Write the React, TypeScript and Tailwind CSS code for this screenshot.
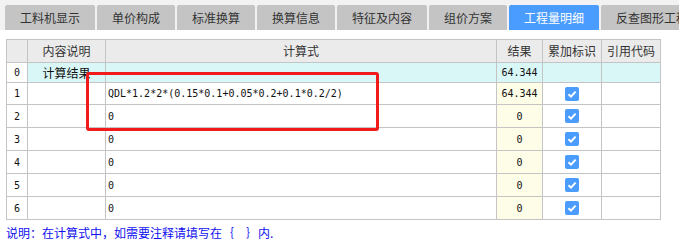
import React from 'react';

const tabs = [
  { label: '工料机显示', w: 'w-[90px]' },
  { label: '单价构成', w: 'w-[78px]' },
  { label: '标准换算', w: 'w-[78px]' },
  { label: '换算信息', w: 'w-[78px]' },
  { label: '特征及内容', w: 'w-[90px]' },
  { label: '组价方案', w: 'w-[78px]' },
  { label: '工程量明细', w: 'w-[90px]', active: true },
  { label: '反查图形工程量', w: 'w-[114px]' },
];

const rows = [
  { formula: 'QDL*1.2*2*(0.15*0.1+0.05*0.2+0.1*0.2/2)', result: '64.344', h: 'h-[22px]' },
  { formula: '0', result: '0', h: 'h-[23px]' },
  { formula: '0', result: '0', h: 'h-[23px]' },
  { formula: '0', result: '0', h: 'h-[23px]' },
  { formula: '0', result: '0', h: 'h-[23px]' },
  { formula: '0', result: '0', h: 'h-[23px]' },
];

const cjk = "font-['Microsoft_YaHei','Noto_Sans_CJK_SC',sans-serif]";
const mono = "font-['DejaVu_Sans_Mono','Liberation_Mono',monospace] text-[10px]";

// column widths, each including its right border
const cols = ['w-[21px]', 'w-[78px]', 'w-[391px]', 'w-[46px]', 'w-[59px]', 'w-[59px]'];

function Check() {
  return (
    <svg width="14" height="14" viewBox="0 0 14 14">
      <rect x="0" y="0" width="14" height="14" rx="2" fill="#4a9cff" />
      <path d="M3.5 7.2 L6 9.6 L10.6 4.6" stroke="#fff" strokeWidth="2" fill="none" />
    </svg>
  );
}

export default function App() {
  return (
    <div className={`relative w-[679px] h-[249px] overflow-hidden bg-white ${cjk}`}>
      {/* tab strip */}
      <div className="flex h-[30px] items-end gap-[2px] bg-[#f2f2f2] pl-[5px]">
        {tabs.map((t) => (
          <div
            key={t.label}
            className={`flex h-[25px] shrink-0 items-center justify-center rounded-t-[2px] text-[12px] ${t.w} ${
              t.active ? 'bg-[#4a9cff] text-white' : 'bg-[#c4c4c4] text-[#333]'
            }`}
          >
            {t.label}
          </div>
        ))}
      </div>

      {/* detail grid */}
      <div className="ml-[6px] mt-[9px] w-[655px] border-l border-t border-[#c4c4c4] text-[12px]">
        <div className="flex h-[23px] bg-[#ebebeb] text-[#333]">
          {['', '内容说明', '计算式', '结果', '累加标识', '引用代码'].map((h, i) => (
            <div
              key={i}
              className={`flex shrink-0 items-center justify-center border-b border-r border-[#c4c4c4] ${cols[i]}`}
            >
              {h}
            </div>
          ))}
        </div>

        <div className="flex h-[20px] text-[#111]">
          <div className={`flex shrink-0 items-center justify-center border-b border-r border-[#c4c4c4] bg-white ${mono} ${cols[0]}`}>0</div>
          <div className={`flex shrink-0 items-center justify-center border-b border-r border-[#c4c4c4] bg-[#d9f7f7] ${cols[1]}`}>计算结果</div>
          <div className={`shrink-0 border-b border-r border-[#c4c4c4] bg-[#d9f7f7] ${cols[2]}`} />
          <div className={`flex shrink-0 items-center justify-center border-b border-r border-[#c4c4c4] bg-[#d9f7f7] ${mono} ${cols[3]}`}>64.344</div>
          <div className={`shrink-0 border-b border-r border-[#c4c4c4] bg-[#d9f7f7] ${cols[4]}`} />
          <div className={`shrink-0 border-b border-r border-[#c4c4c4] bg-[#d9f7f7] ${cols[5]}`} />
        </div>

        {rows.map((r, i) => (
          <div key={i} className={`flex text-[#111] ${r.h}`}>
            <div className={`flex shrink-0 items-center justify-center border-b border-r border-[#c4c4c4] ${mono} ${cols[0]}`}>{i + 1}</div>
            <div className={`shrink-0 border-b border-r border-[#c4c4c4] ${cols[1]}`} />
            <div className={`flex shrink-0 items-center border-b border-r border-[#c4c4c4] pl-[2px] ${mono} ${cols[2]}`}>{r.formula}</div>
            <div className={`flex shrink-0 items-center justify-center border-b border-r border-[#c4c4c4] bg-[#fefde8] ${mono} ${cols[3]}`}>{r.result}</div>
            <div className={`flex shrink-0 items-center justify-center border-b border-r border-[#c4c4c4] ${cols[4]}`}>
              <Check />
            </div>
            <div className={`shrink-0 border-b border-r border-[#c4c4c4] ${cols[5]}`} />
          </div>
        ))}
      </div>

      <div className="ml-[6px] mt-[5px] text-[12px] leading-[15px] text-[#1010f0]">
        说明：在计算式中，如需要注释请填写在｛　｝内.
      </div>

      {/* red highlight annotation */}
      <div className="absolute left-[86px] top-[72px] h-[59px] w-[293px] rounded-[3px] border-[3px] border-[#f21b1b]" />
    </div>
  );
}
